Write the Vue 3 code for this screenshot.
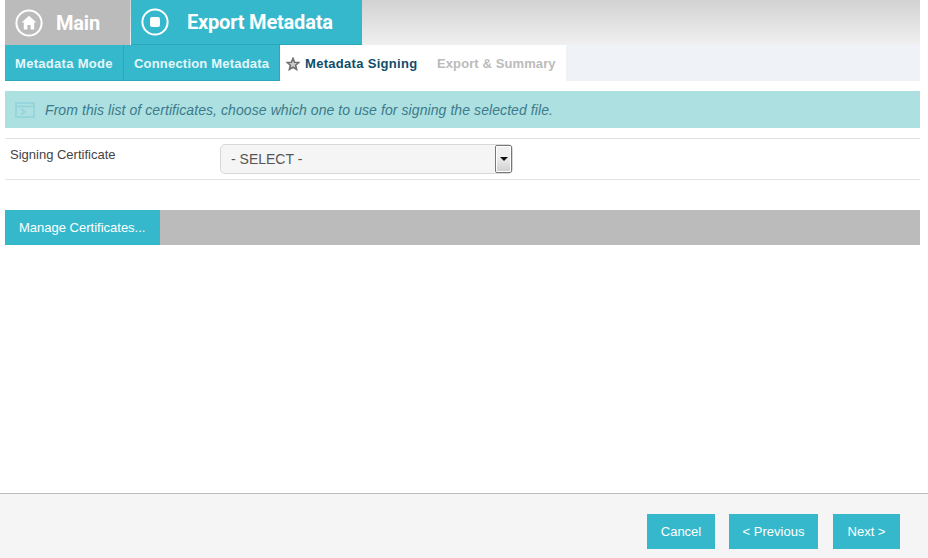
<template>
  <div class="page">
    <div class="content">
      <div class="top-tabs">
        <div class="top-tab main-tab">
          <svg class="top-icon" viewBox="0 0 28 28">
            <circle cx="14" cy="14" r="12.6" fill="none" stroke="#fff" stroke-width="2" />
            <path d="M14 6.8 L6.6 13.6 L8.8 13.6 L8.8 20.4 L12.4 20.4 L12.4 16 L15.6 16 L15.6 20.4 L19.2 20.4 L19.2 13.6 L21.4 13.6 Z" fill="#fff" />
          </svg>
          <span>Main</span>
        </div>
        <div class="top-tab export-tab">
          <svg class="top-icon" viewBox="0 0 28 28">
            <circle cx="14" cy="14" r="12.6" fill="none" stroke="#fff" stroke-width="2" />
            <rect x="9" y="9" width="10" height="10" rx="2" fill="#fff" />
          </svg>
          <span>Export Metadata</span>
        </div>
      </div>

      <div class="steps">
        <div class="step done step-mode">Metadata Mode</div>
        <div class="step done step-conn">Connection Metadata</div>
        <div class="step current">
          <svg class="star" viewBox="0 0 14 14">
            <path d="M7 1.4 L8.6 5.2 L12.8 5.5 L9.6 8.2 L10.6 12.4 L7 10.2 L3.4 12.4 L4.4 8.2 L1.2 5.5 L5.4 5.2 Z" fill="#ccc" stroke="#707070" stroke-width="1.6" />
          </svg>
          Metadata Signing
        </div>
        <div class="step pending">Export &amp; Summary</div>
      </div>

      <div class="info">
        <svg class="info-icon" viewBox="0 0 20 16">
          <rect x="1" y="1" width="18" height="14" fill="none" stroke="#93d3dc" stroke-width="1.6" />
          <path d="M1 4.5 H19" stroke="#93d3dc" stroke-width="1.6" />
          <path d="M6 7 L10 9.8 L6 12.6" fill="none" stroke="#93d3dc" stroke-width="1.6" />
        </svg>
        <span>From this list of certificates, choose which one to use for signing the selected file.</span>
      </div>

      <div class="form-row">
        <label>Signing Certificate</label>
        <div class="fake-select">
          <span class="select-text">- SELECT -</span>
          <span class="select-btn"><i></i></span>
        </div>
      </div>

      <div class="toolbar">
        <button class="manage">Manage Certificates...</button>
      </div>
    </div>

    <div class="footer">
      <button class="foot-btn cancel">Cancel</button>
      <button class="foot-btn prev">&lt; Previous</button>
      <button class="foot-btn next">Next &gt;</button>
    </div>
  </div>
</template>

<script setup>
</script>

<style>
html, body {
  margin: 0;
  background: #fff;
}
</style>

<style scoped>
.page {
  width: 928px;
  height: 558px;
  display: flex;
  flex-direction: column;
  font-family: "Liberation Sans", Arial, sans-serif;
  overflow: hidden;
}

.content {
  flex: 1;
  padding: 0 8px 0 5px;
}

.top-tabs {
  display: flex;
  height: 45px;
  background: linear-gradient(#d2d2d2, #f0f0f0);
}

.top-tab {
  display: flex;
  align-items: center;
  color: #fff;
  font-family: Roboto, sans-serif;
  font-weight: 700;
  font-size: 20px;
  letter-spacing: -0.2px;
}

.main-tab {
  width: 125px;
  background: #bbb;
  padding-left: 10px;
  box-sizing: border-box;
}

.main-tab span {
  margin-left: 13px;
}

.export-tab {
  width: 231px;
  margin-left: 1px;
  padding-left: 10px;
  box-sizing: border-box;
  background: #36b8cc;
  border-bottom: 1px solid #2ca6ba;
}

.export-tab span {
  margin-left: 18px;
}

.top-icon {
  width: 28px;
  height: 28px;
  flex: none;
}

.steps {
  display: flex;
  height: 36px;
  background: #eff3f8;
  font-size: 13px;
  font-weight: 700;
}

.step {
  display: flex;
  align-items: center;
  box-sizing: border-box;
  white-space: nowrap;
}

.done {
  background: #36b8cc;
  color: #e4f7fa;
  border-bottom: 1px solid #2ca6ba;
  border-right: 1px solid #2ca6ba;
  padding-left: 10px;
}

.step-mode {
  width: 119px;
  letter-spacing: 0.3px;
  padding-top: 1px;
}

.step-conn {
  width: 156px;
  letter-spacing: 0.2px;
  padding-top: 1px;
}

.current {
  width: 147px;
  background: #fff;
  color: #0f4d6a;
  padding-left: 6px;
  letter-spacing: 0.3px;
}

.star {
  width: 14px;
  height: 14px;
  margin-right: 5px;
  margin-top: 2px;
}

.pending {
  width: 139px;
  background: #fff;
  color: #bbb;
  padding-left: 10px;
  letter-spacing: 0.1px;
}

.info {
  display: flex;
  align-items: center;
  height: 37px;
  margin-top: 10px;
  background: #ade0e0;
  color: #3c7a8c;
  font-size: 14px;
  font-style: italic;
  letter-spacing: 0.08px;
  padding-left: 10px;
}

.info-icon {
  width: 20px;
  height: 16px;
  margin-right: 10px;
}

.form-row {
  display: flex;
  height: 40px;
  margin-top: 10px;
  border-top: 1px solid #e2e2e2;
  border-bottom: 1px solid #e2e2e2;
  color: #444;
  font-size: 13px;
}

.form-row label {
  width: 215px;
  padding: 8px 0 0 5px;
  box-sizing: border-box;
}

.fake-select {
  display: flex;
  justify-content: space-between;
  box-sizing: border-box;
  width: 293px;
  height: 30px;
  margin-top: 5px;
  border: 1px solid #d8d8d8;
  border-radius: 5px;
  background: #f5f5f5;
}

.select-text {
  font-size: 14px;
  line-height: 28px;
  padding-left: 10px;
  color: #555;
}

.select-btn {
  width: 17px;
  height: 28px;
  box-sizing: border-box;
  border: 1px solid #777;
  border-radius: 2px;
  outline: 1px solid #fff;
  outline-offset: -2px;
  background: linear-gradient(#f0f0f0 40%, #cfcfcf);
  display: flex;
  justify-content: center;
  padding-top: 11px;
}

.select-btn i {
  width: 0;
  height: 0;
  border-left: 4px solid transparent;
  border-right: 4px solid transparent;
  border-top: 4px solid #111;
}

.toolbar {
  height: 35px;
  margin-top: 30px;
  background: #bbb;
}

button {
  border: none;
  background: #36b8cc;
  color: #fff;
  font-family: "Liberation Sans", Arial, sans-serif;
  font-size: 13px;
  padding: 0;
}

.manage {
  width: 155px;
  height: 35px;
  text-align: left;
  padding-left: 14px;
}

.footer {
  display: flex;
  flex: none;
  height: 65px;
  box-sizing: border-box;
  border-top: 1px solid #bbb;
  background: #f5f5f5;
  padding-top: 20px;
}

.foot-btn {
  height: 35px;
}

.cancel {
  width: 68px;
  margin-left: 647px;
}

.prev {
  width: 89px;
  margin-left: 14px;
}

.next {
  width: 67px;
  margin-left: 15px;
}
</style>
